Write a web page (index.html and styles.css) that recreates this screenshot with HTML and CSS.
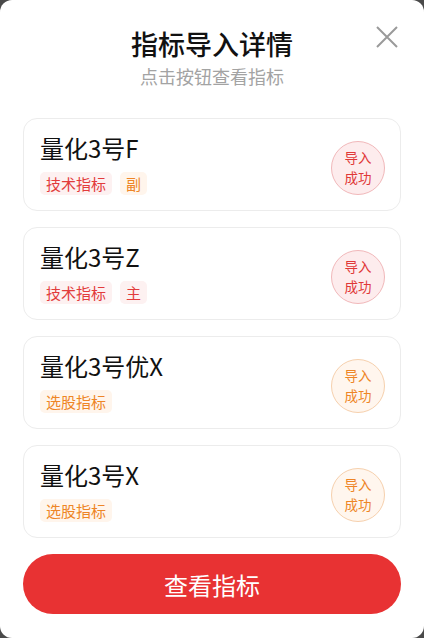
FILE: index.html
```html
<!DOCTYPE html>
<html lang="zh-CN">
<head>
<meta charset="utf-8">
<title>指标导入详情</title>
<link rel="stylesheet" href="styles.css">
</head>
<body>
<div class="dialog">
  <button class="close" aria-label="关闭">
    <svg width="22" height="22" viewBox="0 0 22 22"><path d="M1 1L21 21M21 1L1 21" stroke="#9a9a9a" stroke-width="2" fill="none"/></svg>
  </button>
  <div class="header">
    <div class="title">指标导入详情</div>
    <div class="subtitle">点击按钮查看指标</div>
  </div>
  <div class="list">
    <div class="card">
      <div class="info">
        <div class="name">量化3号F</div>
        <div class="tags"><span class="tag red">技术指标</span><span class="tag orange">副</span></div>
      </div>
      <div class="badge red"><span>导入</span><span>成功</span></div>
    </div>
    <div class="card">
      <div class="info">
        <div class="name">量化3号Z</div>
        <div class="tags"><span class="tag red">技术指标</span><span class="tag red">主</span></div>
      </div>
      <div class="badge red"><span>导入</span><span>成功</span></div>
    </div>
    <div class="card">
      <div class="info">
        <div class="name">量化3号优X</div>
        <div class="tags"><span class="tag orange">选股指标</span></div>
      </div>
      <div class="badge orange"><span>导入</span><span>成功</span></div>
    </div>
    <div class="card">
      <div class="info">
        <div class="name">量化3号X</div>
        <div class="tags"><span class="tag orange">选股指标</span></div>
      </div>
      <div class="badge orange"><span>导入</span><span>成功</span></div>
    </div>
  </div>
  <button class="action">查看指标</button>
</div>
</body>
</html>
```
FILE: styles.css
```css
* { box-sizing: border-box; }
html, body { margin: 0; padding: 0; }
body {
  background: #4a4a4a;
  font-family: "Noto Sans CJK SC", "Noto Sans", sans-serif;
}
.dialog {
  position: relative;
  width: 424px;
  height: 638px;
  background: #fff;
  border-radius: 12px;
  padding: 25px 23px 24px 23px;
  display: flex;
  flex-direction: column;
}
.close {
  position: absolute;
  top: 26px;
  right: 26px;
  width: 22px;
  height: 22px;
  padding: 0;
  border: 0;
  background: none;
  display: block;
}
.close svg { display: block; }
.header {
  display: flex;
  flex-direction: column;
  align-items: center;
}
.title {
  font-size: 27px;
  line-height: 37px;
  color: #111;
  font-weight: 500;
}
.subtitle {
  margin-top: 2px;
  font-size: 18px;
  line-height: 24px;
  color: #a3a3a3;
}
.list {
  margin-top: 30px;
  display: flex;
  flex-direction: column;
  gap: 16px;
}
.card {
  height: 93px;
  border: 1px solid #ececec;
  border-radius: 14px;
  padding: 13px 15px 15px 16px;
  display: flex;
  align-items: center;
}
.info { flex: 1; }
.name {
  font-size: 24px;
  line-height: 32px;
  color: #111;
}
.tags {
  margin-top: 8px;
  display: flex;
  gap: 8px;
}
.tag {
  height: 23px;
  line-height: 23px;
  font-size: 15px;
  padding: 0 6px;
  border-radius: 5px;
}
.tag.red { color: #e23b3b; background: #fdf1f1; }
.tag.orange { color: #ee8526; background: #fff5ec; }
.badge {
  width: 54px;
  height: 54px;
  border-radius: 50%;
  margin-top: 8px;
  display: flex;
  flex-direction: column;
  align-items: center;
  justify-content: center;
  font-size: 13.5px;
  line-height: 19.5px;
}
.badge span { display: block; }
.badge.red { color: #e03838; background: #fdeced; border: 1px solid #f1b8ba; }
.badge.orange { color: #ee8526; background: #fff6ee; border: 1px solid #f6d0ad; }
.action {
  margin-top: 16px;
  height: 60px;
  width: 100%;
  border: 0;
  border-radius: 30px;
  background: #e83233;
  color: #fff;
  font-family: inherit;
  font-size: 24px;
}
```
